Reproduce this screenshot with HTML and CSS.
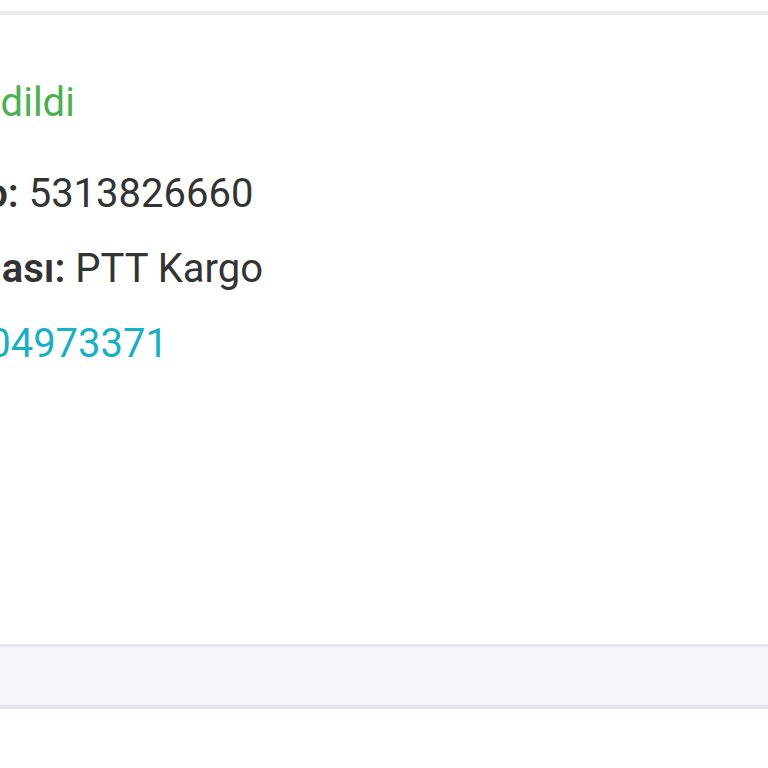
FILE: index.html
```html
<!DOCTYPE html>
<html lang="tr">
<head>
  <meta charset="UTF-8" />
  <meta name="viewport" content="width=device-width, initial-scale=1.0"/>
  <title>Sipariş Detayı</title>
  <link rel="stylesheet" href="styles.css">
</head>
<body>
  <div class="card">
    <div class="card-body">
      <p class="info status-line">
        <svg class="check" viewBox="0 0 24 24" width="34" height="34"><path d="M4 12.5l5 5L20 6.5" fill="none" stroke="#4caf50" stroke-width="2.5" stroke-linecap="round" stroke-linejoin="round"/></svg><span class="status">Teslim Edildi</span>
      </p>
      <p class="info"><span class="label">Alıcı Tel No:</span> 5313826660</p>
      <p class="info"><span class="label">Kargo Firması:</span> PTT Kargo</p>
      <p class="info"><span class="label">No:</span> <a class="track" href="#">7270004973371</a></p>
    </div>
    <div class="card-footer"></div>
  </div>
</body>
</html>
```

FILE: styles.css
```css
body { margin: 0; background: #fff; color: #333; font-family: Roboto, "Noto Sans", sans-serif; overflow: hidden; }
.card { margin-top: 11px; border-top: 4px solid #ebebeb; border-bottom: 4px solid #e4e6ea; background: #fff; }
.card-body { height: 579px; padding-top: 50px; margin-left: -196px; }
.info { margin: 0; font-size: 40px; line-height: 75px; white-space: nowrap; }
.status-line { display: flex; align-items: center; gap: 12px; margin-bottom: 16px; }
.check { flex: none; }
.label { font-weight: 600; }
.status { color: #4caf50; }
.track { color: #19b0c6; text-decoration: none; }
.card-footer { height: 58px; background: #f3f5fa; border-top: 3px solid #e4e6ea; }
```
